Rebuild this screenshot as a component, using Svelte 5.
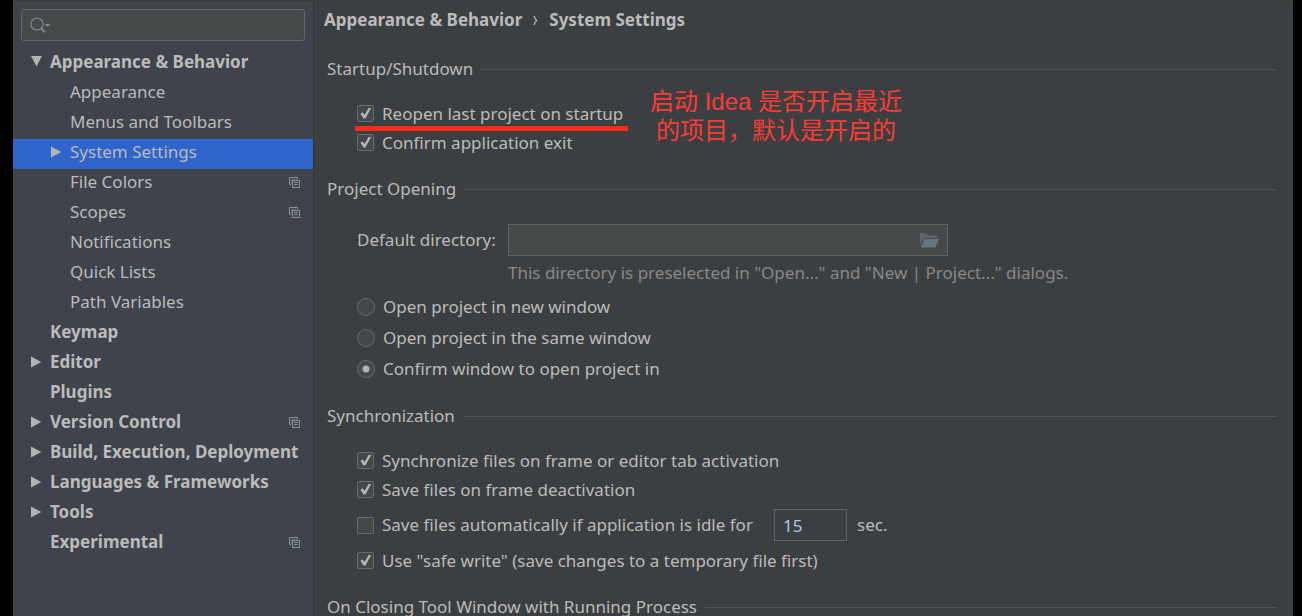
<script>
  const tree = [
    { label: 'Appearance & Behavior', level: 0, arrow: 'down' },
    { label: 'Appearance', level: 1 },
    { label: 'Menus and Toolbars', level: 1 },
    { label: 'System Settings', level: 1, arrow: 'right', selected: true },
    { label: 'File Colors', level: 1, project: true },
    { label: 'Scopes', level: 1, project: true },
    { label: 'Notifications', level: 1 },
    { label: 'Quick Lists', level: 1 },
    { label: 'Path Variables', level: 1 },
    { label: 'Keymap', level: 0 },
    { label: 'Editor', level: 0, arrow: 'right' },
    { label: 'Plugins', level: 0 },
    { label: 'Version Control', level: 0, arrow: 'right', project: true },
    { label: 'Build, Execution, Deployment', level: 0, arrow: 'right' },
    { label: 'Languages & Frameworks', level: 0, arrow: 'right' },
    { label: 'Tools', level: 0, arrow: 'right' },
    { label: 'Experimental', level: 0, project: true }
  ];

  const openModes = [
    { value: 'new', label: 'Open project in new window' },
    { value: 'same', label: 'Open project in the same window' },
    { value: 'ask', label: 'Confirm window to open project in' }
  ];

  let openMode = $state('ask');
  let reopen = $state(true);
  let confirmExit = $state(true);
  let syncOnFrame = $state(true);
  let saveOnDeactivate = $state(true);
  let saveIdle = $state(false);
  let safeWrite = $state(true);
  let idleSeconds = $state('15');
  let directory = $state('');
  let query = $state('');
</script>

{#snippet tick()}
  <svg class="tick" width="17" height="17" viewBox="0 0 17 17" aria-hidden="true">
    <path d="M3.4 8.6L5.8 7.4L7.5 10L11.6 3H14.2L8.4 13.4H6.5Z" fill="#b4b7b8" />
  </svg>
{/snippet}

<div class="window">
  <aside>
    <div class="search">
      <svg width="22" height="18" viewBox="0 0 22 18" aria-hidden="true">
        <circle cx="7" cy="8" r="6" fill="none" stroke="#7f8b91" stroke-width="1.2" />
        <path d="M11 12.2L15 16.2" stroke="#7f8b91" stroke-width="2" />
        <path d="M14.4 8H20.4L17.4 11Z" fill="#7f8b91" />
      </svg>
      <input type="text" aria-label="Search settings" bind:value={query} />
    </div>
    <nav>
      {#each tree as item}
        <button class="node" class:child={item.level === 1} class:selected={item.selected}>
          <span class="arrow">
            {#if item.arrow === 'down'}
              <svg width="11" height="12" viewBox="0 0 11 12" aria-hidden="true"><path d="M0 0H11L5.5 10.5Z" fill="#b3b3b3" /></svg>
            {:else if item.arrow === 'right'}
              <svg width="11" height="12" viewBox="0 0 11 12" aria-hidden="true"><path d="M0 .5L10.3 6L0 11.5Z" fill="#b3b3b3" /></svg>
            {/if}
          </span>
          <span class="name">{item.label}</span>
          {#if item.project}
            <svg class="project" width="11" height="11" viewBox="0 0 11 11" fill="none" stroke="#87939a" aria-hidden="true">
              <path d="M2 7.5H.5V.5H8.5V2" />
              <rect x="3.5" y="3.5" width="7" height="7" />
              <path d="M2.5 7V2.5H8" stroke="#5a636b" />
              <path d="M5 5.5H9M5 7.5H9" />
            </svg>
          {/if}
        </button>
      {/each}
    </nav>
  </aside>

  <main>
    <header>
      <span>Appearance &amp; Behavior</span>
      <svg width="5" height="11" viewBox="0 0 5 11" aria-hidden="true"><path d="M1 1Q2 4 3.6 5.5Q2 7 1 10" fill="none" stroke="#bbbbbb" stroke-width="1.2" /></svg>
      <span>System Settings</span>
    </header>

    <section>
      <h2>Startup/Shutdown</h2>
      <div class="body">
        <label class="option marked">
          <span class="box"><input type="checkbox" bind:checked={reopen} />{@render tick()}</span>
          Reopen last project on startup
        </label>
        <label class="option">
          <span class="box"><input type="checkbox" bind:checked={confirmExit} />{@render tick()}</span>
          Confirm application exit
        </label>
        <p class="note" lang="zh-CN">启动 Idea 是否开启最近<br />的项目，默认是开启的</p>
      </div>
    </section>

    <section>
      <h2>Project Opening</h2>
      <div class="body">
        <div class="directory">
          <label for="directory">Default directory:</label>
          <div class="path">
            <input id="directory" type="text" bind:value={directory} />
            <button aria-label="Browse">
              <svg width="19" height="15" viewBox="0 0 19 15" aria-hidden="true">
                <path d="M0 12V0H6L8 2.4H17V5H4.2Z" fill="#5c666b" />
                <path d="M4.6 6H19L15.4 14.4H.8Z" fill="#69757b" />
              </svg>
            </button>
          </div>
          <p class="hint">This directory is preselected in "Open..." and "New | Project..." dialogs.</p>
        </div>
        <div class="radios">
          {#each openModes as mode}
            <label class="option radio">
              <input type="radio" name="open-mode" value={mode.value} bind:group={openMode} />
              {mode.label}
            </label>
          {/each}
        </div>
      </div>
    </section>

    <section>
      <h2>Synchronization</h2>
      <div class="body">
        <label class="option">
          <span class="box"><input type="checkbox" bind:checked={syncOnFrame} />{@render tick()}</span>
          Synchronize files on frame or editor tab activation
        </label>
        <label class="option">
          <span class="box"><input type="checkbox" bind:checked={saveOnDeactivate} />{@render tick()}</span>
          Save files on frame deactivation
        </label>
        <div class="idle">
          <label class="option">
            <span class="box"><input type="checkbox" bind:checked={saveIdle} />{@render tick()}</span>
            Save files automatically if application is idle for
          </label>
          <input type="text" aria-label="Idle seconds" bind:value={idleSeconds} />
          <span>sec.</span>
        </div>
        <label class="option">
          <span class="box"><input type="checkbox" bind:checked={safeWrite} />{@render tick()}</span>
          Use "safe write" (save changes to a temporary file first)
        </label>
      </div>
    </section>

    <section>
      <h2>On Closing Tool Window with Running Process</h2>
    </section>
  </main>
</div>

<style>
  :global(body) {
    margin: 0;
    background: #000;
    overflow: hidden;
  }
  .window,
  .window * {
    box-sizing: border-box;
  }
  .window {
    display: grid;
    grid-template-columns: 301px 1fr;
    height: 100vh;
    margin: 0 9px 0 13px;
    overflow: hidden;
    border-top: 1px solid #3c3b36;
    background: #3c3f41;
    color: #bbbbbb;
    font: 17px/24px "Noto Sans", "Open Sans", sans-serif;
  }
  input,
  button {
    margin: 0;
    padding: 0;
    border: 0;
    background: none;
    color: inherit;
    font: inherit;
    outline: none;
  }
  h2,
  p {
    margin: 0;
    font-weight: 400;
    font-size: inherit;
  }

  aside {
    background: #3e434c;
    border-right: 1px solid #323437;
  }
  .search {
    display: flex;
    align-items: center;
    gap: 4px;
    height: 32px;
    margin: 8px;
    padding: 0 8px;
    border: 1px solid #646668;
    border-radius: 3px;
    background: #45494a;
  }
  .search input {
    flex: 1;
    min-width: 0;
  }
  .node {
    display: flex;
    align-items: center;
    width: 100%;
    height: 30px;
    padding: 0 13px 4px 18px;
    text-align: left;
    font-weight: 700;
  }
  .child {
    padding-left: 38px;
    font-weight: 400;
  }
  .selected {
    background: #2f65ca;
  }
  .arrow {
    flex: 0 0 19px;
    height: 12px;
    display: flex;
  }
  .name {
    flex: 1;
    min-width: 0;
    overflow: hidden;
    white-space: nowrap;
  }
  .project {
    flex: none;
  }

  main {
    min-width: 0;
    padding: 7px 17px 0 13px;
    white-space: nowrap;
  }
  header {
    display: flex;
    align-items: center;
    gap: 11px;
    margin: 0 0 25px -3px;
    font-weight: 700;
  }
  h2 {
    display: flex;
    align-items: center;
    gap: 8px;
  }
  h2::after {
    content: "";
    flex: 1;
    height: 1px;
    background: #515151;
  }
  .body {
    position: relative;
    padding: 18px 0 20px 30px;
  }
  .option {
    display: flex;
    align-items: center;
    gap: 8px;
    width: fit-content;
    height: 29px;
  }
  .box {
    display: grid;
  }
  .box > :global(*) {
    grid-area: 1 / 1;
  }
  .box input {
    appearance: none;
    width: 17px;
    height: 17px;
    border: 1px solid #6b6b6b;
    border-radius: 2px;
    background: #43494a;
  }
  .tick {
    pointer-events: none;
    visibility: hidden;
  }
  .box input:checked + .tick {
    visibility: visible;
  }
  .marked {
    position: relative;
  }
  .marked::after {
    content: "";
    position: absolute;
    left: -2px;
    right: -5px;
    bottom: -3px;
    height: 5px;
    background: #ff2a1c;
  }
  .note {
    position: absolute;
    left: 323px;
    top: 6px;
    color: #fc3a34;
    font: 24px/29px "Liberation Sans", "Noto Sans CJK SC", sans-serif;
    text-align: center;
  }

  .directory {
    display: grid;
    grid-template-columns: 151px 440px;
    align-items: center;
    padding-top: 5px;
    row-gap: 5px;
  }
  .path {
    display: flex;
    align-items: center;
    height: 32px;
    padding: 0 8px;
    border: 1px solid #646464;
    background: #45494a;
  }
  .path input {
    flex: 1;
    min-width: 0;
  }
  .path button {
    display: flex;
  }
  .hint {
    grid-column: 2;
    color: #888888;
  }
  .radios {
    padding-top: 6px;
  }
  .radio {
    height: 31px;
  }
  .radio input {
    appearance: none;
    width: 18px;
    height: 18px;
    border: 1px solid #6b6b6b;
    border-radius: 50%;
    background: #43494a;
  }
  .radio input:checked {
    background: radial-gradient(circle, #b4b4b4 3px, #43494a 4px);
  }
  .idle {
    display: flex;
    align-items: center;
    gap: 10px;
    height: 42px;
  }
  .idle .option {
    min-width: 407px;
  }
  .idle > input {
    width: 73px;
    height: 32px;
    padding: 0 8px;
    border: 1px solid #646464;
    color: #a9c7e8;
  }
</style>
